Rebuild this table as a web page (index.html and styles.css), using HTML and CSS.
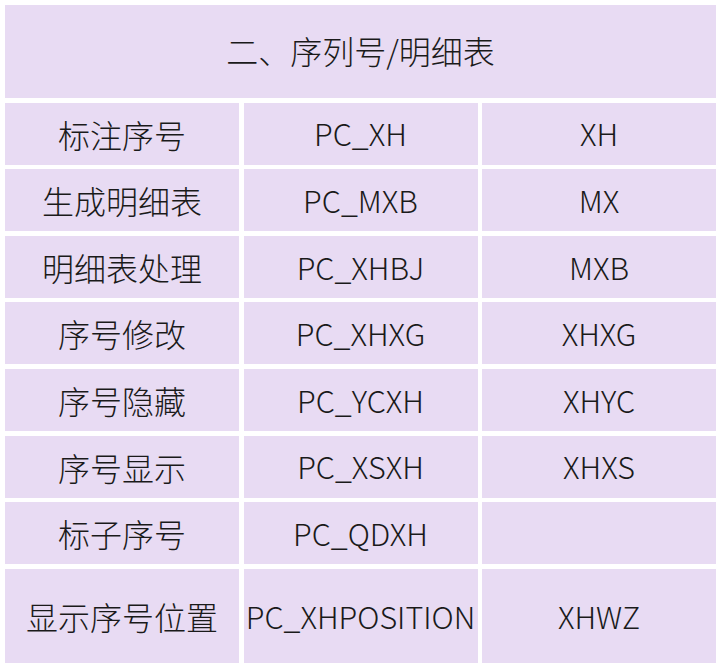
FILE: index.html
```html
<!DOCTYPE html>
<html lang="zh-CN">
<head>
<meta charset="utf-8">
<title>序列号/明细表</title>
<link rel="stylesheet" href="styles.css">
</head>
<body>
<div class="sheet">
  <div class="cell head zh">二、序列号/明细表</div>

  <div class="cell zh">标注序号</div>
  <div class="cell">PC_XH</div>
  <div class="cell">XH</div>

  <div class="cell zh">生成明细表</div>
  <div class="cell">PC_MXB</div>
  <div class="cell">MX</div>

  <div class="cell zh">明细表处理</div>
  <div class="cell">PC_XHBJ</div>
  <div class="cell">MXB</div>

  <div class="cell zh">序号修改</div>
  <div class="cell">PC_XHXG</div>
  <div class="cell">XHXG</div>

  <div class="cell zh">序号隐藏</div>
  <div class="cell">PC_YCXH</div>
  <div class="cell">XHYC</div>

  <div class="cell zh">序号显示</div>
  <div class="cell">PC_XSXH</div>
  <div class="cell">XHXS</div>

  <div class="cell zh">标子序号</div>
  <div class="cell">PC_QDXH</div>
  <div class="cell"></div>

  <div class="cell zh">显示序号位置</div>
  <div class="cell">PC_XHPOSITION</div>
  <div class="cell">XHWZ</div>
</div>
</body>
</html>
```
FILE: styles.css
```css
html, body {
  margin: 0;
  padding: 0;
  background: #ffffff;
}

.sheet {
  display: grid;
  grid-template-columns: 234px 234px 234px;
  grid-template-rows: 93px repeat(7, 62px) 94px;
  gap: 4.6px 4.5px;
  padding: 5px;
  width: 711px;
  font-family: "Noto Sans CJK SC", "Noto Sans", sans-serif;
  font-weight: 300;
  font-size: 30.5px;
  color: #1a1a1a;
}

.cell {
  background: #e8dbf3;
  display: flex;
  align-items: center;
  justify-content: center;
  white-space: nowrap;
  line-height: 1;
}

.zh {
  font-size: 32px;
}

.head {
  grid-column: 1 / 4;
  padding-bottom: 4px;
}
```
